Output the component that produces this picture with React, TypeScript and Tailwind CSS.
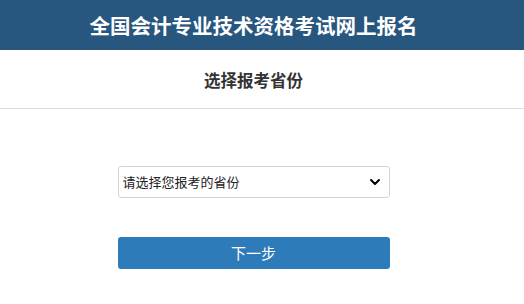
import { ChevronDown } from 'lucide-react';

export default function App() {
  return (
    <div
      className="min-h-[304px] w-full bg-white"
      style={{ fontFamily: '"Noto Sans CJK SC", "Noto Sans", sans-serif' }}
    >
      <header className="flex h-[50px] items-center justify-center bg-[#27567f] pr-[17px]">
        <h1 className="text-[20.5px] font-bold leading-none text-white">全国会计专业技术资格考试网上报名</h1>
      </header>

      <div className="flex h-[59px] items-center justify-center border-b border-[#dddddd] pr-[17px] pt-[3px]">
        <h2 className="text-[16.5px] font-bold text-[#333333]">选择报考省份</h2>
      </div>

      <div className="flex flex-col items-center pr-[17px] pt-[57px]">
        <div className="relative w-[272px]">
          <select className="h-[32px] w-full appearance-none rounded-[3px] border border-[#d4d4d4] bg-white pl-[4px] text-[13px] text-[#222222] outline-none">
            <option>请选择您报考的省份</option>
          </select>
          <ChevronDown
            className="pointer-events-none absolute right-[7px] top-1/2 h-[16px] w-[16px] -translate-y-1/2 text-black"
            strokeWidth={3}
          />
        </div>

        <button className="mt-[39px] h-[32px] w-[272px] rounded-[3px] bg-[#2e7bb9] text-[15px] text-white">
          下一步
        </button>
      </div>
    </div>
  );
}
